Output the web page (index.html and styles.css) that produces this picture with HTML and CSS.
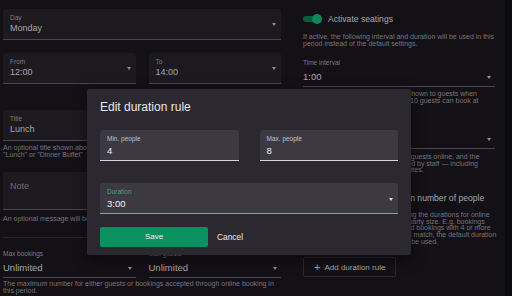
FILE: index.html
```html
<!DOCTYPE html>
<html lang="en">
<head>
    <meta charset="UTF-8">
    <title>Opening period</title>
    <link rel="stylesheet" href="styles.css">
</head>
<body>
<div class="page">
    <div class="col-left">
        <div class="field select">
            <div class="label">Day</div>
            <div class="value">Monday</div>
            <span class="arrow"></span>
        </div>
        <div class="row">
            <div class="field select half">
                <div class="label">From</div>
                <div class="value">12:00</div>
                <span class="arrow"></span>
            </div>
            <div class="field select half">
                <div class="label">To</div>
                <div class="value">14:00</div>
                <span class="arrow"></span>
            </div>
        </div>
        <div class="field title-field">
            <div class="label">Title</div>
            <div class="value">Lunch</div>
        </div>
        <p class="help">An optional title shown above<br>"Lunch" or "Dinner Buffet"</p>
        <div class="field note">
            <div class="placeholder">Note</div>
        </div>
        <p class="help">An optional message will be shown to guests in this period.</p>
        <hr class="divider">
        <div class="row">
            <div class="plain half">
                <div class="label">Max bookings</div>
                <div class="value">Unlimited</div>
                <span class="arrow"></span>
            </div>
            <div class="plain half">
                <div class="label">Max guests</div>
                <div class="value">Unlimited</div>
                <span class="arrow"></span>
            </div>
        </div>
        <p class="help">The maximum number for either guests or bookings accepted through online booking in this period.</p>
    </div>

    <div class="col-right">
        <div class="switch-row">
            <span class="switch"><span class="knob"></span></span>
            <span>Activate seatings</span>
        </div>
        <p class="help">If active, the following interval and duration will be used in this period instead of the default settings.</p>
        <div class="plain interval">
            <div class="label">Time interval</div>
            <div class="value">1:00</div>
            <span class="arrow"></span>
        </div>
        <p class="help nowrap">The intervals between start times shown to guests when<br>they book online. E.g. with a 1:00, 10 guests can book at</p>
        <div class="plain duration">
            <div class="label">Duration</div>
            <div class="value">1:30</div>
            <span class="arrow"></span>
        </div>
        <p class="help nowrap">The duration of bookings made by guests online, and the<br>default for bookings that are created by staff — including<br>the rules below, in steps of 15 minutes.</p>
        <div class="switch-row heading">
            <span class="switch"><span class="knob"></span></span>
            <span>Duration depending on number of people</span>
        </div>
        <p class="help nowrap">Optionally, set up rules for overriding the durations for online<br>bookings made depending on the party size. E.g. bookings<br>of up to 3 people can stay 1:30, and bookings with 4 or more<br>people can stay 3:00. If no rule is a match, the default duration<br>of this period, or the settings, shall be used.</p>
        <a class="add-rule" href="javascript:;"><span class="plus">+</span>Add duration rule</a>
    </div>
    <div class="edge"></div>
</div>

<div class="dialog">
    <h2>Edit duration rule</h2>
    <div class="dlg-row">
        <div class="dlg-field">
            <div class="label">Min. people</div>
            <div class="value">4</div>
        </div>
        <div class="dlg-field">
            <div class="label">Max. people</div>
            <div class="value">8</div>
        </div>
    </div>
    <div class="dlg-field active">
        <div class="label">Duration</div>
        <div class="value">3:00</div>
        <span class="arrow"></span>
    </div>
    <div class="actions">
        <a class="btn-save" href="javascript:;">Save</a>
        <a class="btn-cancel" href="javascript:;">Cancel</a>
    </div>
</div>
</body>
</html>
```

FILE: styles.css
```css
/* reset */
body,h2,p,hr{margin:0;padding:0}
body{
    font-family:"Liberation Sans", Arial, sans-serif;
    background:#131116;
    color:#a5a2a9;
    width:512px;
    height:296px;
    overflow:hidden;
    position:relative;
}
a{text-decoration:none;color:inherit}

.page {
    display: flex;
    padding: 9px 0 0 3px;
    height: 287px;
}
.col-left {
    width: 278px;
}
.col-right {
    width: 192px;
    margin-left: 22px;
}
.edge {
    margin-left: auto;
    width: 7px;
    margin-top: -9px;
    background: #0c0b0e;
}

/* filled fields */
.field {
    position: relative;
    background: #1c1a1f;
    border-bottom: 1px solid #4a4750;
    border-radius: 3px 3px 0 0;
    box-sizing: border-box;
    height: 31px;
    padding: 5px 7px 0;
}
.label {
    font-size: 6.5px;
    line-height: 8px;
    color: #7d7a82;
}
.value {
    font-size: 9px;
    line-height: 13px;
    color: #a8a5ac;
}
.arrow {
    position: absolute;
    right: 5px;
    top: 14px;
    border-left: 2.5px solid transparent;
    border-right: 2.5px solid transparent;
    border-top: 3px solid #8f8c94;
}
.row {
    display: flex;
    gap: 13px;
    margin-top: 13px;
}
.half {
    flex: 1;
}
.title-field {
    margin-top: 26px;
}
.help {
    font-size: 7px;
    line-height: 6.7px;
    color: #77747c;
    margin-top: 4px;
}
.nowrap {
    white-space: nowrap;
}
.note {
    margin-top: 14px;
    height: 38px;
}
.placeholder {
    font-size: 9px;
    line-height: 13px;
    color: #6e6b73;
    padding-top: 3px;
}
.note + .help {
    margin-top: 6px;
}
.divider {
    border: 0;
    border-top: 1px solid #26242a;
    margin-top: 14px;
}
.divider + .row {
    margin-top: 12px;
}
.row + .help {
    margin-top: 3px;
}

/* standard selects */
.plain {
    position: relative;
    border-bottom: 1px solid #4a4750;
    height: 28px;
    box-sizing: border-box;
}
.plain .value {
    font-size: 9.5px;
    line-height: 14px;
    margin-top: 3px;
}
.plain .arrow {
    right: 4px;
    top: 17px;
}

/* right column */
.switch-row {
    display: flex;
    align-items: center;
    gap: 6px;
    margin-top: 5px;
    height: 10px;
    font-size: 8.6px;
    color: #a8a5ac;
}
.switch {
    position: relative;
    width: 19px;
    height: 10px;
    flex: none;
}
.switch::before {
    content: "";
    position: absolute;
    left: 0;
    top: 2px;
    width: 16px;
    height: 6px;
    border-radius: 3px;
    background: #0d5a3c;
}
.knob {
    position: absolute;
    right: 0;
    top: 0;
    width: 10px;
    height: 10px;
    border-radius: 50%;
    background: #0c8a57;
}
.switch-row + .help {
    margin-top: 10px;
}
.interval {
    margin-top: 12px;
}
.plain + .help {
    margin-top: 4px;
}
.duration {
    margin-top: 16px;
}
.duration + .help {
    margin-top: 5px;
}
.switch-row.heading {
    margin-top: 18px;
    height: 12px;
}
.switch-row.heading + .help {
    margin-top: 8px;
}
.add-rule {
    display: flex;
    align-items: center;
    width: fit-content;
    margin-top: 12px;
    height: 18px;
    padding: 0 10px 0 10px;
    border: 1px solid #2a282e;
    border-radius: 2px;
    font-size: 8px;
    color: #a8a5ac;
}
.plus {
    font-size: 11px;
    margin-right: 4px;
}

/* dialog */
.dialog {
    position: absolute;
    left: 87px;
    top: 89px;
    width: 324px;
    height: 166px;
    box-sizing: border-box;
    padding: 11px 13px 0;
    background: #2b2830;
    border-radius: 2px;
    box-shadow: 0 4px 14px rgba(0,0,0,.5);
}
.dialog h2 {
    font-size: 12px;
    line-height: 14px;
    font-weight: normal;
    color: #e8e6ec;
}
.dlg-row {
    display: flex;
    gap: 21px;
    margin-top: 16px;
}
.dlg-row .dlg-field {
    flex: 1;
}
.dlg-field {
    position: relative;
    background: #3c3942;
    border-bottom: 1px solid #d8d5dc;
    border-radius: 3px 3px 0 0;
    height: 31px;
    box-sizing: border-box;
    padding: 5px 7px 0;
}
.dlg-field .label {
    color: #c3c0c7;
}
.dlg-field .value {
    color: #f2f1f4;
    font-size: 9.5px;
    line-height: 13px;
    margin-top: 1px;
}
.dlg-field.active {
    margin-top: 22px;
    border-bottom-color: #4cbf8d;
}
.dlg-field.active .label {
    color: #46a57c;
}
.dlg-field .arrow {
    right: 5px;
    top: 15px;
    border-top-color: #d8d5dc;
}
.actions {
    display: flex;
    align-items: center;
    margin-top: 13px;
}
.btn-save {
    width: 108px;
    height: 20px;
    line-height: 20px;
    text-align: center;
    background: #0a9160;
    border-radius: 2px;
    font-size: 8px;
    color: #f0f0f0;
}
.btn-cancel {
    margin-left: 9px;
    font-size: 8.4px;
    color: #eceaee;
}
```
